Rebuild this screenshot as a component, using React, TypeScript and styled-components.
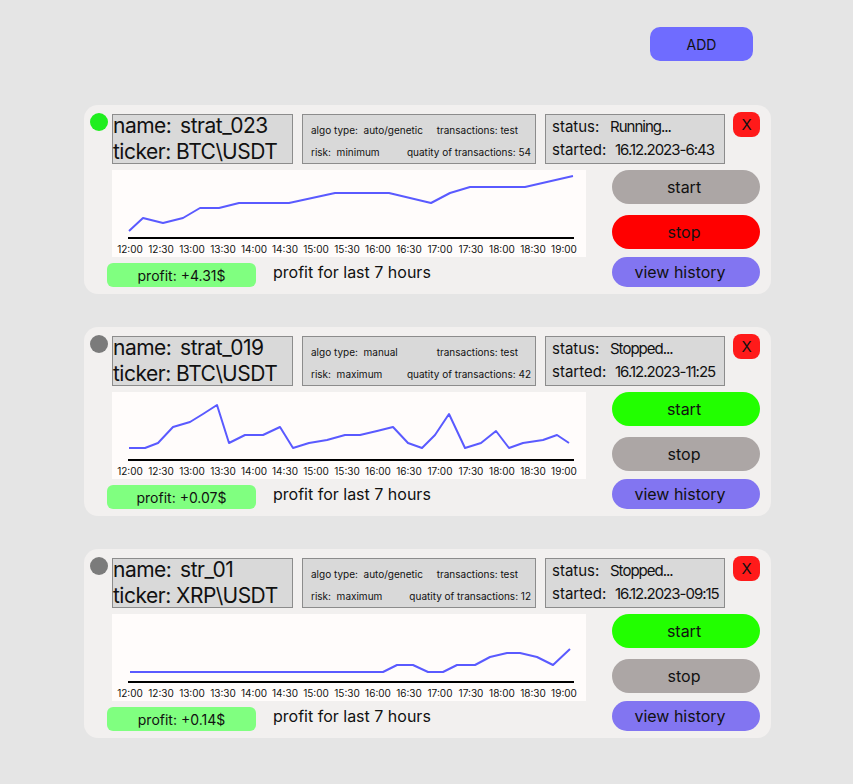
import React from 'react';
import styled, { createGlobalStyle } from 'styled-components';

const GlobalStyle = createGlobalStyle`
  * {
    box-sizing: border-box;
  }
  body {
    margin: 0;
    background-color: #e5e5e5;
    font-family: Inter, 'Noto Sans', sans-serif;
    color: #111;
  }
`;

const Page = styled.div`
  display: flex;
  flex-direction: column;
  align-items: flex-start;
  padding: 27px 0 40px 84px;
  min-height: 100vh;
`;

const TopBar = styled.div`
  width: 687px;
  display: flex;
  justify-content: flex-end;
  padding-right: 18px;
  margin-bottom: 44px;
`;

const AddButton = styled.button`
  width: 103px;
  height: 34px;
  border: none;
  border-radius: 10px;
  background-color: #6f6cff;
  font-family: Inter, sans-serif;
  font-size: 14px;
  color: #111;
  cursor: pointer;
`;

const List = styled.div`
  display: flex;
  flex-direction: column;
  gap: 33px;
`;

const Card = styled.div`
  width: 687px;
  height: 189px;
  background-color: #f2f0ef;
  border-radius: 14px;
  padding: 8px 11px 7px 6px;
  display: flex;
  flex-direction: column;
`;

const Header = styled.div`
  display: flex;
  align-items: flex-start;
`;

const Dot = styled.div<{ $active: boolean }>`
  width: 18px;
  height: 18px;
  border-radius: 50%;
  background-color: ${(p) => (p.$active ? '#1fee1f' : '#7b7b7b')};
  margin-right: 4px;
  flex-shrink: 0;
`;

const InfoBox = styled.div<{ $width: number }>`
  width: ${(p) => p.$width}px;
  height: 50px;
  margin-top: 1px;
  margin-right: 9px;
  background-color: #d9d9d9;
  border: 1px solid #8c8c8c;
  flex-shrink: 0;
`;

const NameBox = styled(InfoBox)`
  display: flex;
  flex-direction: column;
  justify-content: center;
  font-size: 21px;
  letter-spacing: -0.5px;
  line-height: 26px;
  white-space: pre;
`;

const AlgoBox = styled(InfoBox)`
  display: flex;
  flex-direction: column;
  padding: 7px 0 0 8px;
  gap: 6px;
  font-size: 10px;
`;

const AlgoRow = styled.div<{ $right: number }>`
  display: flex;
  justify-content: space-between;
  padding-right: ${(p) => p.$right}px;
  line-height: 16px;
  white-space: pre;
`;

const StatusBox = styled(InfoBox)`
  margin-right: 8px;
  padding: 0 0 0 6px;
  font-size: 15px;
  line-height: 23px;
  white-space: nowrap;
`;

const StatusLine = styled.div`
  display: flex;
`;

const StatusLabel = styled.span<{ $width: number }>`
  width: ${(p) => p.$width}px;
  flex-shrink: 0;
`;

const StatusValue = styled.span`
  letter-spacing: -1px;
`;

const CloseButton = styled.button`
  width: 27px;
  height: 25px;
  margin-top: -1px;
  border: none;
  border-radius: 8px;
  background-color: #ff1a1a;
  font-family: Inter, sans-serif;
  font-size: 15px;
  color: #111;
  padding: 0;
  cursor: pointer;
`;

const Body = styled.div`
  display: flex;
  margin-top: 6px;
  padding-left: 22px;
  gap: 26px;
`;

const LeftColumn = styled.div`
  display: flex;
  flex-direction: column;
  width: 474px;
`;

const ChartBox = styled.div`
  width: 474px;
  height: 87px;
  background-color: #fffcfb;

  svg {
    display: block;
  }
`;

const ProfitRow = styled.div`
  display: flex;
  align-items: flex-start;
  margin-top: 6px;
  margin-left: -5px;
  gap: 17px;
`;

const ProfitPill = styled.div`
  width: 149px;
  height: 24px;
  border-radius: 6px;
  background-color: #80ff80;
  font-size: 14px;
  line-height: 25px;
  text-align: center;
`;

const ProfitCaption = styled.span`
  font-size: 16px;
  line-height: 18px;
`;

const ButtonColumn = styled.div`
  display: flex;
  flex-direction: column;
  width: 148px;
`;

const ActionButton = styled.button<{ $color: string; $short?: boolean; $gap: number }>`
  height: ${(p) => (p.$short ? 30 : 34)}px;
  margin-top: ${(p) => p.$gap}px;
  border: none;
  border-radius: 17px;
  background-color: ${(p) => p.$color};
  font-family: Inter, sans-serif;
  font-size: 16px;
  color: #111;
  padding: 0 ${(p) => (p.$short ? 12 : 4)}px 0 0;
  cursor: pointer;
`;

const times = [
  '12:00', '12:30', '13:00', '13:30', '14:00', '14:30', '15:00', '15:30',
  '16:00', '16:30', '17:00', '17:30', '18:00', '18:30', '19:00',
];

type Strategy = {
  name: string;
  ticker: string;
  running: boolean;
  algo: string;
  risk: string;
  quantity: number;
  started: string;
  profit: string;
  points: number[][];
};

const strategies: Strategy[] = [
  {
    name: 'strat_023',
    ticker: 'BTC\\USDT',
    running: true,
    algo: 'auto/genetic',
    risk: 'minimum',
    quantity: 54,
    started: '16.12.2023-6:43',
    profit: '+4.31$',
    points: [
      [17, 61], [31, 48], [51, 53], [71, 48], [88, 38], [107, 38], [127, 33],
      [177, 33], [223, 23], [277, 23], [319, 33], [338, 23], [358, 17],
      [413, 17], [461, 6],
    ],
  },
  {
    name: 'strat_019',
    ticker: 'BTC\\USDT',
    running: false,
    algo: 'manual',
    risk: 'maximum',
    quantity: 42,
    started: '16.12.2023-11:25',
    profit: '+0.07$',
    points: [
      [17, 56], [33, 56], [46, 51], [61, 35], [78, 30], [91, 22], [105, 13],
      [117, 51], [133, 43], [151, 43], [168, 35], [181, 56], [197, 51],
      [215, 48], [233, 43], [248, 43], [265, 39], [281, 35], [296, 51],
      [310, 56], [323, 43], [337, 22], [353, 56], [369, 51], [384, 39],
      [397, 56], [411, 51], [431, 48], [445, 43], [457, 51],
    ],
  },
  {
    name: 'str_01',
    ticker: 'XRP\\USDT',
    running: false,
    algo: 'auto/genetic',
    risk: 'maximum',
    quantity: 12,
    started: '16.12.2023-09:15',
    profit: '+0.14$',
    points: [
      [18, 58], [271, 58], [285, 51], [301, 51], [316, 58], [331, 58],
      [345, 51], [363, 51], [378, 43], [395, 39], [408, 39], [425, 43],
      [441, 51], [458, 35],
    ],
  },
];

function ProfitChart({ points }: { points: number[][] }) {
  return (
    <svg width="474" height="87" viewBox="0 0 474 87">
      <polyline
        points={points.map((p) => p.join(',')).join(' ')}
        fill="none"
        stroke="#5a5aff"
        strokeWidth="2"
        strokeLinejoin="round"
      />
      <line x1="16" y1="68" x2="462" y2="68" stroke="#000" strokeWidth="2" />
      {times.map((t, i) => (
        <text
          key={t}
          x={18 + i * 31}
          y={83}
          textAnchor="middle"
          fontSize="10"
          fontFamily="Inter, sans-serif"
          fill="#111"
        >
          {t}
        </text>
      ))}
    </svg>
  );
}

function StrategyCard({ s }: { s: Strategy }) {
  return (
    <Card>
      <Header>
        <Dot $active={s.running} />
        <NameBox $width={181}>
          <span>{`name: \u2009${s.name}`}</span>
          <span>{`ticker: ${s.ticker}`}</span>
        </NameBox>
        <AlgoBox $width={234}>
          <AlgoRow $right={17}>
            <span>{`algo type:  ${s.algo}`}</span>
            <span>transactions: test</span>
          </AlgoRow>
          <AlgoRow $right={4}>
            <span>{`risk:  ${s.risk}`}</span>
            <span>{`quatity of transactions: ${s.quantity}`}</span>
          </AlgoRow>
        </AlgoBox>
        <StatusBox $width={180}>
          <StatusLine>
            <StatusLabel $width={58}>status:</StatusLabel>
            <StatusValue>{s.running ? 'Running...' : 'Stopped...'}</StatusValue>
          </StatusLine>
          <StatusLine>
            <StatusLabel $width={63}>started:</StatusLabel>
            <StatusValue>{s.started}</StatusValue>
          </StatusLine>
        </StatusBox>
        <CloseButton>X</CloseButton>
      </Header>
      <Body>
        <LeftColumn>
          <ChartBox>
            <ProfitChart points={s.points} />
          </ChartBox>
          <ProfitRow>
            <ProfitPill>profit: {s.profit}</ProfitPill>
            <ProfitCaption>profit for last 7 hours</ProfitCaption>
          </ProfitRow>
        </LeftColumn>
        <ButtonColumn>
          <ActionButton $gap={0} $color={s.running ? '#aca6a5' : '#22ff00'}>
            start
          </ActionButton>
          <ActionButton $gap={11} $color={s.running ? '#ff0000' : '#aca6a5'}>
            stop
          </ActionButton>
          <ActionButton $gap={8} $short $color="#8275f1">
            view history
          </ActionButton>
        </ButtonColumn>
      </Body>
    </Card>
  );
}

export default function App() {
  return (
    <>
      <GlobalStyle />
      <Page>
        <TopBar>
          <AddButton>ADD</AddButton>
        </TopBar>
        <List>
          {strategies.map((s) => (
            <StrategyCard key={s.name} s={s} />
          ))}
        </List>
      </Page>
    </>
  );
}
